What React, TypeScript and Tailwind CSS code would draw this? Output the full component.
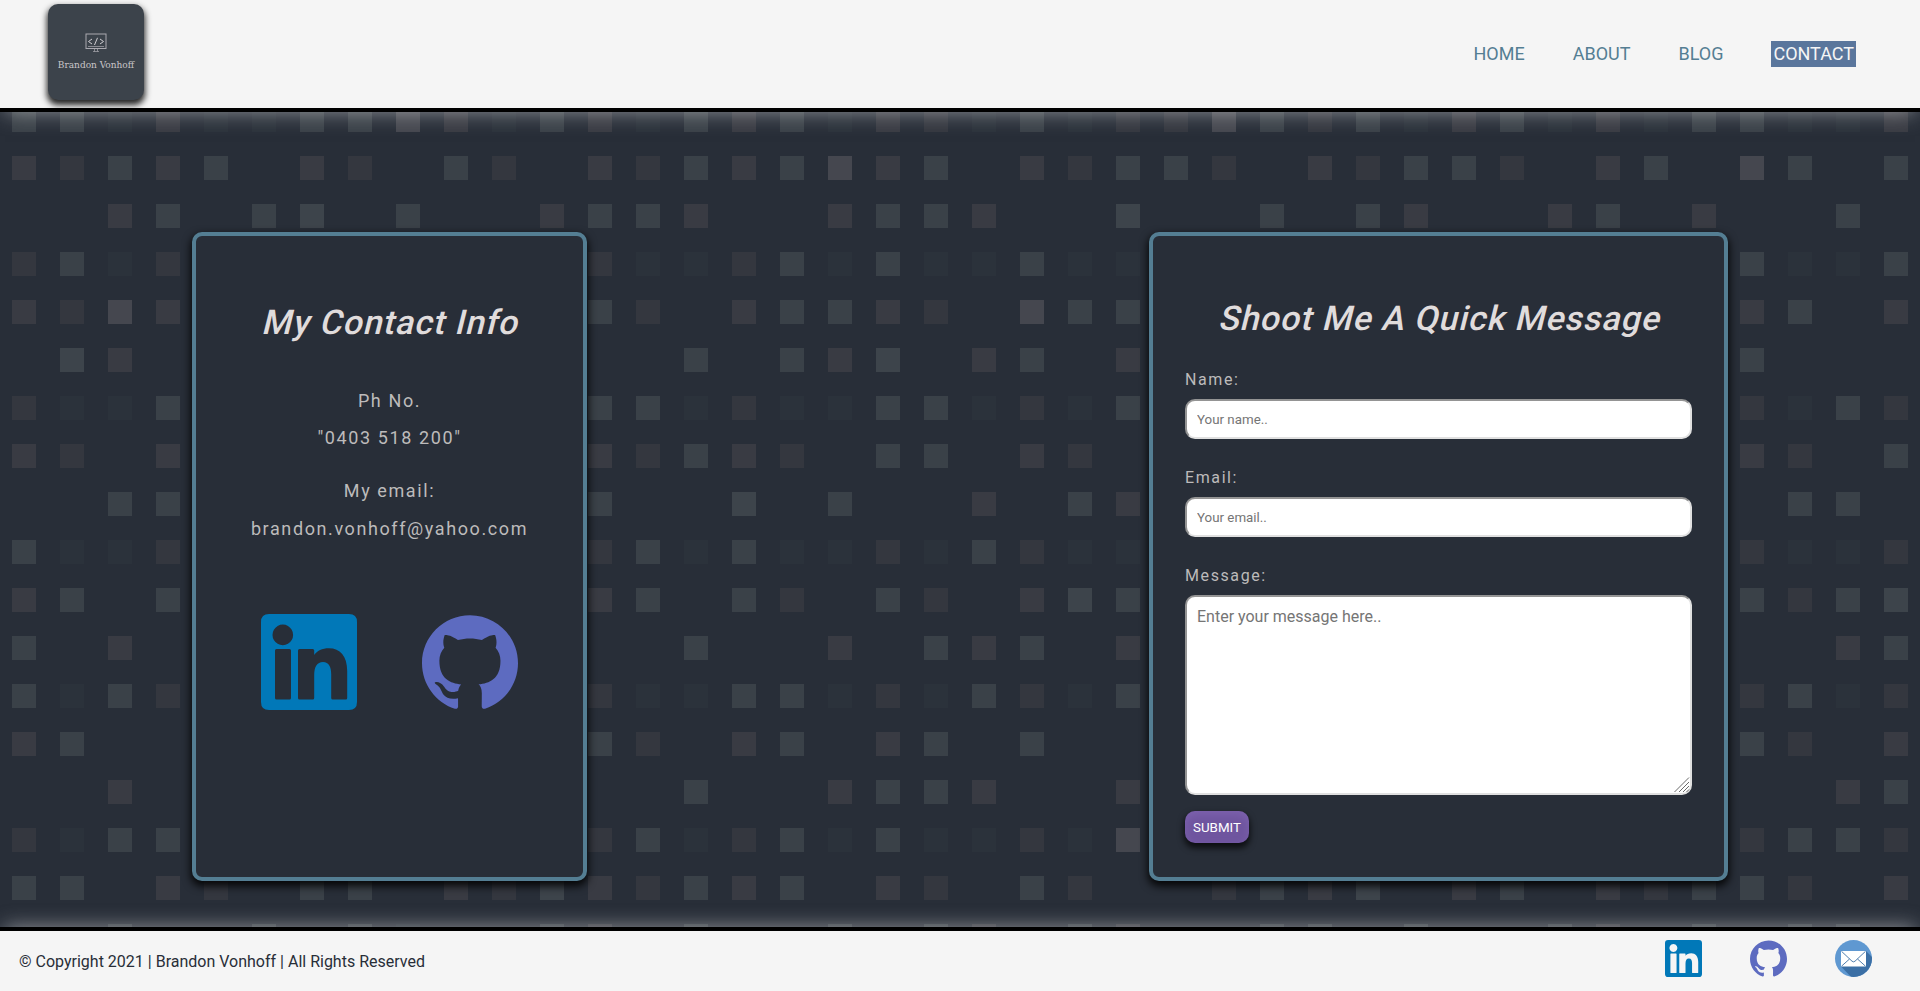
import React from "react";

// Background tiles: one string per row, one letter per 48px cell.
const ROWS = [
  "ddacaaddfcadcadcdacbadabbfdbdacdacaddaac",
  "cbdcd-cb-db-cbdcdfcd-cbddb-cbddb-cd-fd-d",
  "--cd-de-d--cddc--cddc--e--d-dc--cd-c--d-",
  "bdab--------baabdadaadaa------------daad",
  "cbfc--------db-cddcb-fdd------------cd-c",
  "-ec-----------d-dce-cd-c------------d---",
  "baad--------ddabaaddabad------------badb",
  "cb-c--------cbdcb-dd-cb-------------cb-d",
  "--dd--------d--e-d--c-dc-------------dd-",
  "daab--------bdadaabadbaa------------baab",
  "cd-d--------cd-db-db-ced------------dbde",
  "d-c-----------d--c-dcd-c--------------cd",
  "dadb--------baaddabadbad------------bdab",
  "cd----------db-cd-cd-d--------------db-c",
  "--c-----------d--cddc--c--------------cd",
  "badd--------bdabdadaabaf------------bddb",
  "dd-cb-dd-cbecbdcd-cb-db--bdce-cd-cbddb-c",
  "--d--d-da--dc-d--d-dc-dc--dd-d--dc-d-dd-",
];

const TILE: Record<string, string> = {
  a: "#2b323b",
  b: "#34373f",
  c: "#393b43",
  d: "#3a4148",
  e: "#3d444b",
  f: "#45474f",
};

function Pattern() {
  return (
    <svg className="absolute inset-x-0 top-0" width="1920" height="819" viewBox="0 112 1920 819" shapeRendering="crispEdges" aria-hidden="true">
      {ROWS.map((row, r) =>
        row.split("").map((k, c) =>
          k === "-" ? null : <rect key={`${r}-${c}`} x={12 + c * 48} y={108 + r * 48} width="24" height="24" fill={TILE[k]} />
        )
      )}
    </svg>
  );
}

function LinkedIn({ className }: { className: string }) {
  return (
    <svg className={className} viewBox="0 0 96 96" fill="#0178b8" fillRule="evenodd" aria-label="LinkedIn">
      <path d="M8 0H88Q96 0 96 8V88Q96 96 88 96H8Q0 96 0 88V8Q0 0 8 0ZM21.8 10.6a10.3 10.3 0 1 0 .01 0ZM15.5 35Q14 35 14 36.5V84Q14 85.6 15.5 85.6H28.5Q30 85.6 30 84V36.500Q30 35 28.500 35ZM38.500 35Q37 35 37 36.500V84Q37 85.600 38.500 85.600H51.700Q53.200 85.600 53.200 84V61C53.200 53 56 48 62 48C68 48 70.200 53 70.200 60V84Q70.200 85.600 71.700 85.600H84.700Q86.200 85.600 86.200 84V57C86.200 42 79 34.300 68 34.300C61 34.300 56 37 53.200 41V36.500Q53.200 35 51.700 35Z" />
    </svg>
  );
}

function GitHub({ className }: { className: string }) {
  return (
    <svg className={className} viewBox="0 0 24 24" fill="#5d6bc0" aria-label="GitHub">
      <path d="M12 .297c-6.63 0-12 5.373-12 12 0 5.303 3.438 9.8 8.205 11.385.6.113.82-.258.82-.577 0-.285-.01-1.04-.015-2.04-3.338.724-4.042-1.61-4.042-1.61C4.422 18.07 3.633 17.7 3.633 17.7c-1.087-.744.084-.729.084-.729 1.205.084 1.838 1.236 1.838 1.236 1.07 1.835 2.809 1.305 3.495.998.108-.776.417-1.305.76-1.605-2.665-.3-5.466-1.332-5.466-5.93 0-1.31.465-2.38 1.235-3.22-.135-.303-.54-1.523.105-3.176 0 0 1.005-.322 3.3 1.23.96-.267 1.98-.399 3-.405 1.02.006 2.04.138 3 .405 2.28-1.552 3.285-1.23 3.285-1.23.645 1.653.24 2.873.12 3.176.765.84 1.23 1.91 1.23 3.22 0 4.61-2.805 5.625-5.475 5.92.42.36.81 1.096.81 2.22 0 1.606-.015 2.896-.015 3.286 0 .315.21.69.825.57C20.565 22.092 24 17.592 24 12.297c0-6.627-5.373-12-12-12" />
    </svg>
  );
}

function Mail({ className }: { className: string }) {
  return (
    <svg className={className} viewBox="0 0 37 37" aria-label="Email">
      <defs>
        <clipPath id="disc"><circle cx="18.500" cy="18.500" r="18.500" /></clipPath>
      </defs>
      <g clipPath="url(#disc)">
        <rect width="37" height="37" fill="#5f98d1" />
        <path d="M31 11L43 23V43H22L6 26.500Z" fill="#3b6fa5" />
      </g>
      <rect x="6" y="11" width="25" height="15.500" fill="#fff" />
      <path d="M6.500 11.300L17 21.200Q18.500 22.500 20 21.200L30.500 11.300M6.500 26.200L14.500 19M30.500 26.200L22.500 19" fill="none" stroke="#3b6fa5" strokeWidth=".9" />
    </svg>
  );
}

const NAV = ["HOME", "ABOUT", "BLOG"];

const FIELD =
  "block w-full rounded-[10px] border-2 border-t-[#949494] border-l-[#949494] border-r-[#e0e0e0] border-b-[#e0e0e0] bg-white px-2.5 tracking-normal text-[#222] placeholder:text-[#757575] outline-none";

const CARD =
  "relative rounded-[10px] border-4 border-[#547e93] bg-[#282e38] shadow-[0_4px_8px_1px_rgba(0,0,0,0.9)]";

const TITLE =
  "origin-[50%_78%] -skew-x-[14deg] text-center text-[34px] leading-[44px] font-medium tracking-[0.95px] whitespace-nowrap text-[#e0dcdc]";

export default function App() {
  return (
    <div className="flex h-[991px] w-[1920px] flex-col overflow-hidden bg-[#282e38] font-['Roboto',sans-serif]">
      <header className="relative z-10 flex h-28 shrink-0 items-start justify-between border-b-4 border-black bg-[#f5f5f5] pt-1 pl-12 pr-16 shadow-[0_5px_20px_-5px_rgba(245,245,245,0.5)]">
        <div className="flex size-24 flex-col items-center rounded-[10px] bg-[#3c434b] pt-[29px] text-[#c9c6c9] shadow-[0_4px_6px_1px_rgba(0,0,0,0.85)]">
          <svg width="22" height="20" viewBox="0 0 22 20" fill="none" stroke="#aaa9b0" strokeWidth="1" aria-hidden="true">
            <rect x="1" y="1" width="20" height="14.500" />
            <path d="M3 13.500H19M9.500 16V18.500M12.500 16V18.500M8 18.500H14" strokeWidth=".7" />
            <path d="M7 6L3.500 8.500L7 11M15 6L18.500 8.500L15 11M12.500 4.800L9.500 12" stroke="#d0ced2" />
          </svg>
          <span className="mt-[5px] whitespace-nowrap font-['DejaVu_Serif_Condensed','DejaVu_Serif',serif] text-[10px] leading-[14px]">Brandon Vonhoff</span>
        </div>
        <nav className="flex gap-12 pt-[37px] text-[18px] leading-[26px] text-[#547e93]">
          {NAV.map((n) => (
            <a key={n}>{n}</a>
          ))}
          <a className="bg-[#5a769c] px-0.5 text-[#f5f5f5]">CONTACT</a>
        </nav>
      </header>

      <main className="relative flex flex-1 items-start justify-between pt-[120px] pr-48 pl-48">
        <Pattern />
        <section className={`${CARD} flex h-[649px] w-[395px] flex-col items-center text-[18px] tracking-[1.6px] text-[#bdbbbb]`}>
          <h1 className={`${TITLE} mt-[64px]`}>My Contact Info</h1>
          <p className="mt-[45px] leading-[24px]">Ph No.</p>
          <p className="mt-[13px] leading-[24px]">"0403 518 200"</p>
          <p className="mt-[29px] leading-[24px]">My email:</p>
          <p className="mt-[14px] leading-[24px]">brandon.vonhoff@yahoo.com</p>
          <div className="mt-[73px] flex gap-[65px]">
            <LinkedIn className="size-24" />
            <GitHub className="size-24" />
          </div>
        </section>

        <section className={`${CARD} h-[649px] w-[579px] px-8`}>
          <h1 className={`${TITLE} mt-[60px]`}>Shoot Me A Quick Message</h1>
          <form className="mt-[28px] text-[16px] tracking-[1.6px] text-[#bdbbbb]">
            <label className="block h-[31px] leading-[24px]">Name:</label>
            <input className={`${FIELD} h-10 text-[13.333px]`} placeholder="Your name.." />
            <label className="mt-[27px] block h-[31px] leading-[24px]">Email:</label>
            <input className={`${FIELD} h-10 text-[13.333px]`} placeholder="Your email.." />
            <label className="mt-[27px] block h-[31px] leading-[24px]">Message:</label>
            <div className="relative">
              <textarea className={`${FIELD} h-[200px] resize-none py-2.5 text-[16px] leading-[19px]`} placeholder="Enter your message here.." />
              <svg className="absolute right-0.5 bottom-0.5" width="16" height="16" viewBox="0 0 16 16" fill="none" stroke="#6b6b6b" strokeWidth="1" aria-hidden="true">
                <path d="M.5 15L15 .5M5 15L15 5M9 15L15 9M12.500 15L15 12.500" />
              </svg>
            </div>
            <button type="button" className="mt-4 block h-8 w-16 rounded-[10px] bg-[#6f559f] pt-px text-center text-[13.333px] tracking-normal text-white shadow-[0_4px_6px_1px_rgba(0,0,0,0.7),inset_0_4px_10px_rgba(150,120,200,0.35)]">
              SUBMIT
            </button>
          </form>
        </section>
      </main>

      <footer className="relative z-10 flex h-16 shrink-0 items-center justify-between border-t-4 border-black bg-[#f5f5f5] pr-12 pl-[19px] shadow-[0_-5px_20px_-5px_rgba(245,245,245,0.5)]">
        <p className="pt-0.5 text-[16px] text-[#282e38]">© Copyright 2021 | Brandon Vonhoff | All Rights Reserved</p>
        <div className="flex gap-12 pb-[5px]">
          <LinkedIn className="size-[37px]" />
          <GitHub className="size-[37px]" />
          <Mail className="size-[37px]" />
        </div>
      </footer>
    </div>
  );
}
